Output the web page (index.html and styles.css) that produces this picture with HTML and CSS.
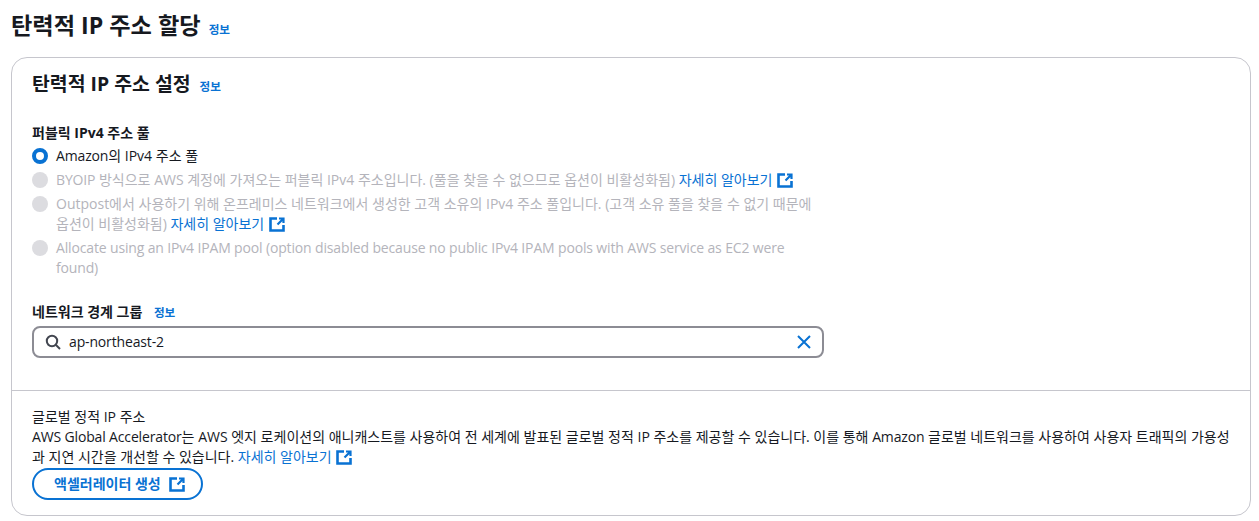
FILE: index.html
```html
<!DOCTYPE html>
<html lang="ko">
<head>
<meta charset="utf-8">
<title>탄력적 IP 주소 할당</title>
<link rel="stylesheet" href="styles.css">
</head>
<body>
<svg class="defs" width="0" height="0" aria-hidden="true">
  <symbol id="ext" viewBox="0 0 16 16">
    <path d="M14.500 9V14.500H1.500V2.500h6.500" fill="none" stroke="currentColor" stroke-width="2.600"/>
    <path d="M10 2.500h4.500V7M14 3 8.500 8.500" fill="none" stroke="currentColor" stroke-width="2.200"/>
  </symbol>
</svg>
<header class="page-head">
  <h1 class="page-title">탄력적 IP 주소 할당</h1>
  <a class="info">정보</a>
</header>
<main class="card">
  <section class="card-main">
    <div class="card-head">
      <h2 class="card-title">탄력적 IP 주소 설정</h2>
      <a class="info">정보</a>
    </div>
    <div class="label">퍼블릭 IPv4 주소 풀</div>
    <div class="radios">
      <div class="radio">
        <span class="dot dot-on"></span>
        <span class="radio-text"><span class="latin">Amazon</span>의 IPv4 주소 풀</span>
      </div>
      <div class="radio disabled">
        <span class="dot"></span>
        <span class="radio-text"><span class="latin">BYOIP</span> 방식으로 AWS 계정에 가져오는 퍼블릭 IPv4 주소입니다. (풀을 찾을 수 없으므로 옵션이 비활성화됨) <a class="link">자세히 알아보기 <svg class="ext"><use href="#ext"/></svg></a></span>
      </div>
      <div class="radio disabled">
        <span class="dot"></span>
        <span class="radio-text">Outpost에서 사용하기 위해 온프레미스 네트워크에서 생성한 고객 소유의 IPv4 주소 풀입니다. (고객 소유 풀을 찾을 수 없기 때문에 옵션이 비활성화됨) <a class="link">자세히 알아보기 <svg class="ext"><use href="#ext"/></svg></a></span>
      </div>
      <div class="radio disabled">
        <span class="dot"></span>
        <span class="radio-text latin">Allocate using an IPv4 IPAM pool (option disabled because no public IPv4 IPAM pools with AWS service as EC2 were found)</span>
      </div>
    </div>
    <div class="label label-group">네트워크 경계 그룹 <a class="info info-label">정보</a></div>
    <div class="search">
      <svg class="search-icon" viewBox="0 0 16 16"><circle cx="7" cy="7" r="5.2" fill="none" stroke="currentColor" stroke-width="2"/><path d="m11 11 4 4" fill="none" stroke="currentColor" stroke-width="2"/></svg>
      <span class="search-value latin">ap-northeast-2</span>
      <svg class="clear-icon" viewBox="0 0 16 16"><path d="m2 2 12 12M14 2 2 14" fill="none" stroke="currentColor" stroke-width="2"/></svg>
    </div>
  </section>
  <section class="card-foot">
    <div>글로벌 정적 IP 주소</div>
    <p class="foot-text"><span class="latin">AWS Global Accelerator</span>는 AWS 엣지 로케이션의 애니캐스트를 사용하여 전 세계에 발표된 글로벌 정적 IP 주소를 제공할 수 있습니다. 이를 통해 <span class="latin">Amazon</span> 글로벌 네트워크를 사용하여 사용자 트래픽의 가용성과 지연 시간을 개선할 수 있습니다. <a class="link">자세히 알아보기 <svg class="ext"><use href="#ext"/></svg></a></p>
    <a class="button">액셀러레이터 생성 <svg class="ext"><use href="#ext"/></svg></a>
  </section>
</main>
</body>
</html>
```
FILE: styles.css
```css
* { box-sizing: border-box; }
html, body { margin: 0; padding: 0; background: #fff; }
body {
  width: 1259px;
  height: 521px;
  overflow: hidden;
  padding: 0 8px 0 11px;
  font-family: "Open Sans", "Noto Sans CJK KR", sans-serif;
  font-size: 14px;
  line-height: 20px;
  color: #16191f;
}
.defs { position: absolute; }
.latin { letter-spacing: -0.15px; }
.page-head { display: flex; align-items: baseline; gap: 8px; height: 57px; padding-top: 10px; }
.page-title { margin: 0; font-size: 23.2px; line-height: 30px; font-weight: 700; }
.info { color: #0972d3; font-size: 11.6px; font-weight: 700; }
.card { border: 1px solid #c6c6cd; border-radius: 16px; height: 459px; }
.card-main { padding: 12px 20px 0; height: 333px; border-bottom: 1px solid #c6c6cd; }
.card-head { display: flex; align-items: baseline; gap: 9px; height: 50px; }
.card-title { margin: 0; font-size: 19.4px; line-height: 28px; font-weight: 700; }
.label { font-weight: 700; line-height: 20px; margin-top: 3px; }
.radios { display: flex; flex-direction: column; gap: 4px; margin-top: 3px; }
.radio { display: flex; gap: 8px; width: 785px; }
.radio-text { flex: 1; }
.dot { flex: none; width: 16px; height: 16px; margin-top: 2px; border-radius: 50%; background: #dcdce0; }
.dot-on { background: #fff; border: 4.5px solid #0972d3; }
.disabled .radio-text { color: #b4b4bb; }
.link { color: #0972d3; }
.ext { width: 16px; height: 16px; vertical-align: -3px; margin-left: 1px; }
.label-group { margin-top: 24px; }
.info-label { margin-left: 8px; }
.search {
  display: flex; align-items: center; height: 32px; width: 792px; margin-top: 3px; padding: 0 10px 0 11px;
  border: 2px solid #8c8c94; border-radius: 8px;
}
.search-icon { width: 16px; height: 16px; color: #424650; }
.search-value { flex: 1; margin-left: 8px; }
.clear-icon { width: 16px; height: 16px; color: #0972d3; }
.card-foot { padding: 16px 20px 0; }
.foot-text { margin: 0; }
.button {
  display: inline-flex; align-items: center; gap: 8px; height: 32px; margin-top: 1px; padding: 0 16px 0 20px;
  border: 2px solid #0972d3; border-radius: 20px; color: #0972d3; font-weight: 700;
}
.button .ext { margin-left: 0; vertical-align: 0; }
```
